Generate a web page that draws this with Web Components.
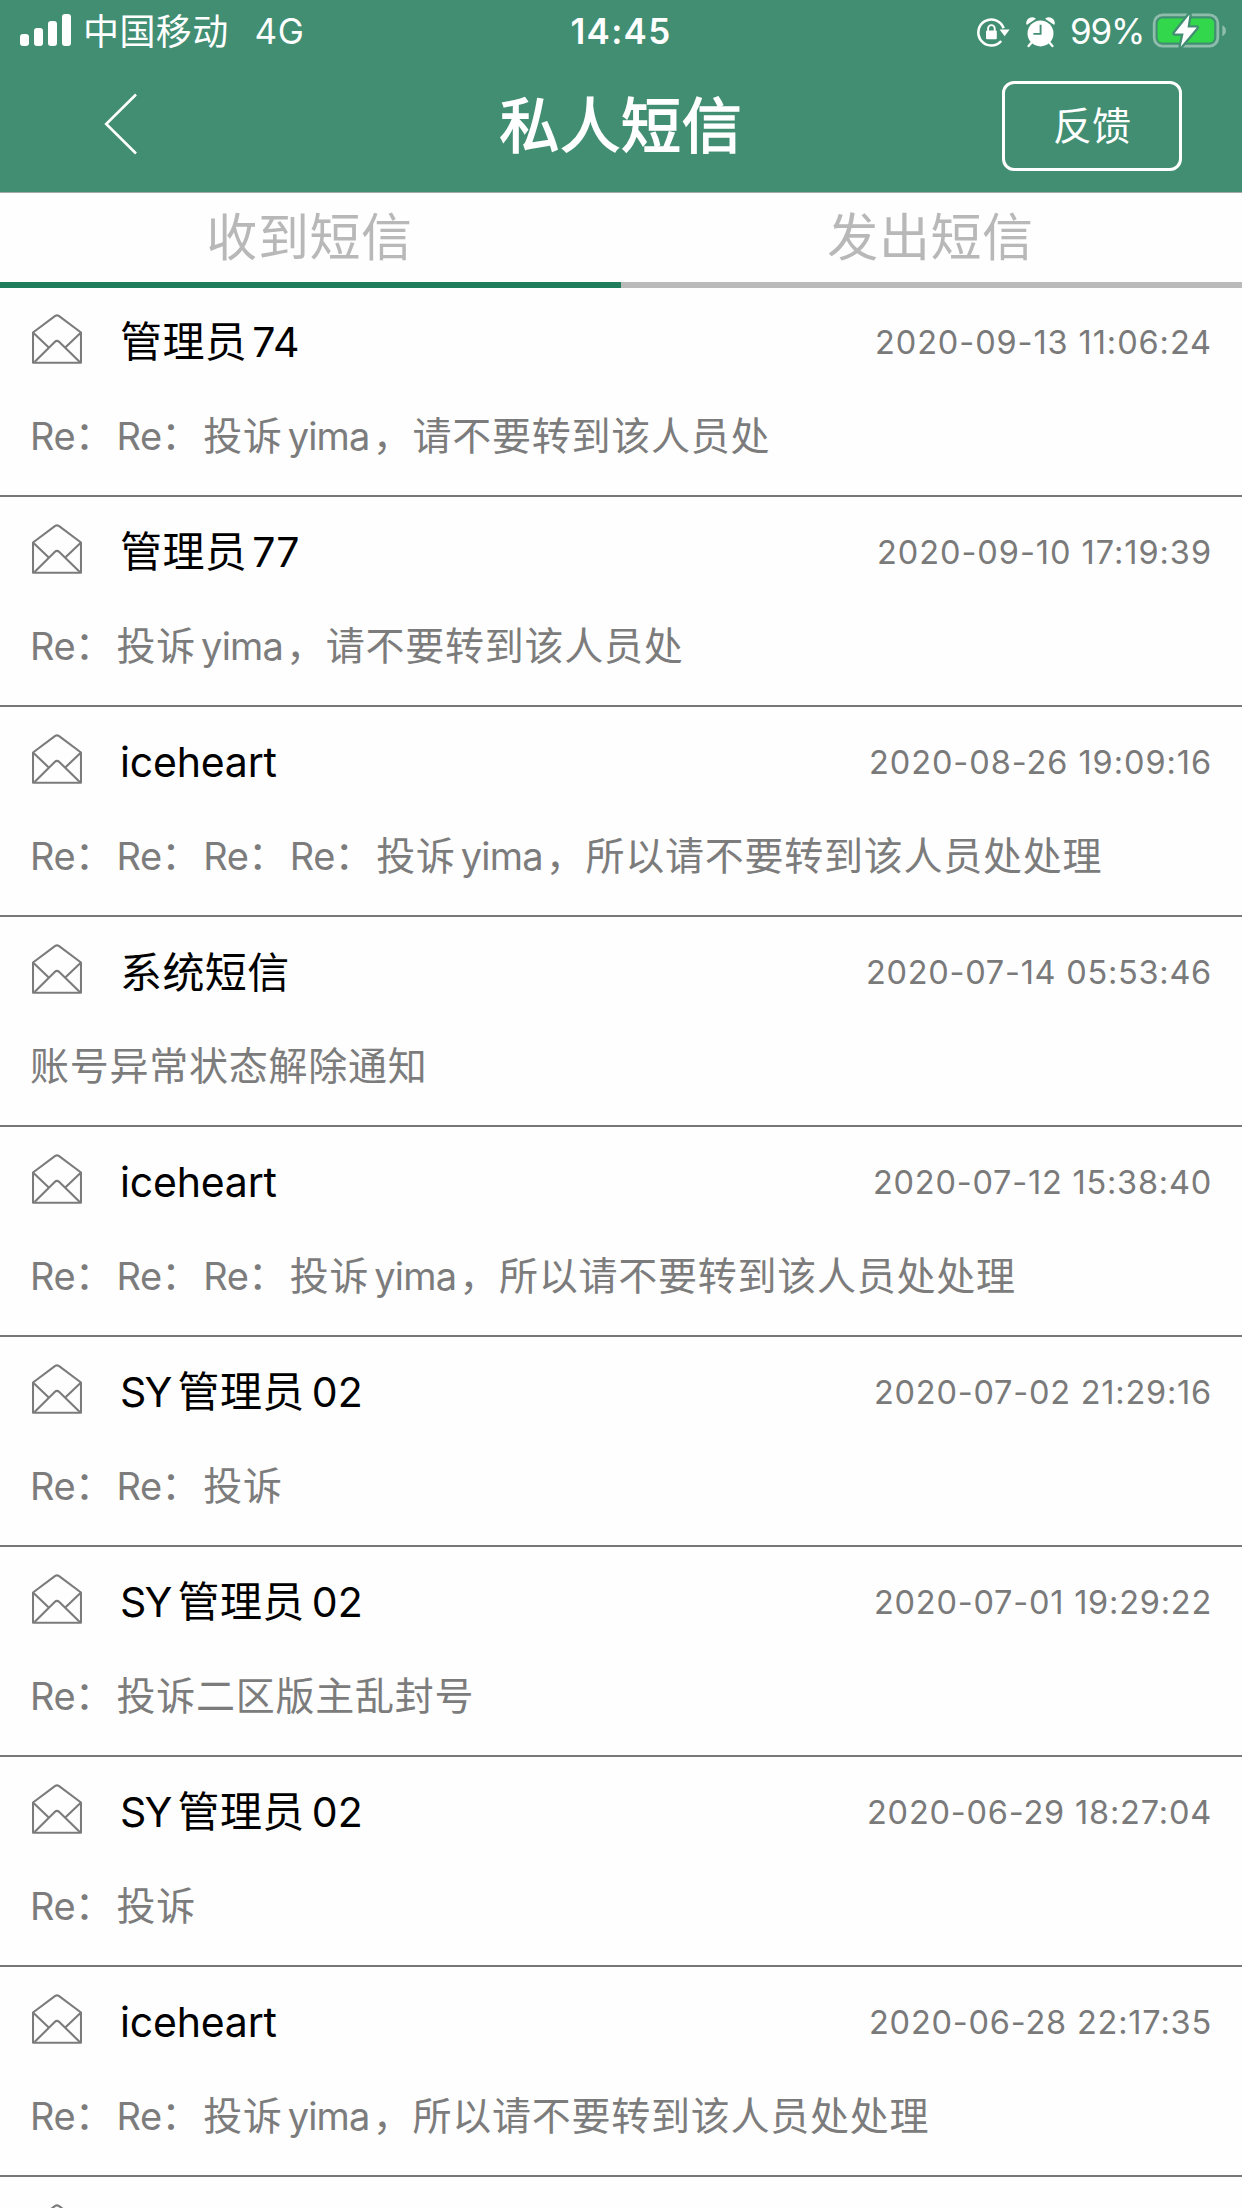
<!DOCTYPE html>
<html lang="zh-CN">
<head>
<meta charset="utf-8">
<title>私人短信</title>
<style>
html,body{margin:0;padding:0;background:#fefefe}
body{width:1242px;height:2208px;overflow:hidden;font-family:Inter,"Noto Sans CJK SC",sans-serif}
</style>
</head>
<body>
<message-app></message-app>
<script>
const define = (name, html, setup) => {
  const template = document.createElement('template');
  template.innerHTML = html;
  customElements.define(name, class extends HTMLElement {
    constructor() {
      super();
      this.attachShadow({mode: 'open'}).append(template.content.cloneNode(true));
    }
    connectedCallback() { if (setup) setup(this, this.shadowRoot); }
  });
};

/* A run of text tracked out (or in) to an exact advance width. */
define('fit-run', `<style>:host{display:inline-block;white-space:pre;text-align:left}span{display:inline-block}</style><span><slot></slot></span>`,
  (host, root) => {
    const w = +host.getAttribute('w');
    const span = root.querySelector('span');
    const natural = span.getBoundingClientRect().width;
    host.style.letterSpacing = (w - natural) / host.textContent.length + 'px';
    host.style.width = w + 'px';
  });

define('signal-bars', `<style>:host{display:flex;align-items:flex-end;gap:5px;height:32px}
i{width:9px;border-radius:3px;background:#fff}</style>
<i style="height:12px"></i><i style="height:18px"></i><i style="height:25px"></i><i style="height:32px"></i>`);

define('lock-icon', `<style>:host{display:block}svg{display:block}</style>
<svg width="34" height="34" viewBox="0 0 34 34" fill="none">
<path d="M27.6 13.2A13 13 0 1 0 25.2 26" stroke="#fff" stroke-width="2.6"/>
<path d="M23.6 14.6h10l-5 6.6z" fill="#fff"/>
<rect x="10" y="15.4" width="10.8" height="8.8" rx="1" fill="#fff"/>
<path d="M12.1 16v-2.6a3.3 3.3 0 0 1 6.6 0V16" stroke="#fff" stroke-width="1.9"/></svg>`);

define('alarm-icon', `<style>:host{display:block}svg{display:block}</style>
<svg width="31" height="32" viewBox="0 0 31 32">
<circle cx="15.5" cy="17.4" r="13" fill="#fff"/>
<path d="M2 7.8A5.4 5.4 0 0 1 9.8 2.6zM29 7.8A5.4 5.4 0 0 0 21.2 2.6z" fill="#fff" stroke="#fff" stroke-width="1.6" stroke-linejoin="round"/>
<path d="M6.2 27l-2.6 3M24.8 27l2.6 3" stroke="#fff" stroke-width="2.4" stroke-linecap="round"/>
<path d="M15.6 8.8v9.1H8.4" fill="none" stroke="#418e73" stroke-width="1.9"/></svg>`);

define('battery-icon', `<style>:host{display:block}svg{display:block}</style>
<svg width="76" height="42" viewBox="0 0 76 42">
<rect x="2.2" y="5.8" width="63.6" height="31.4" rx="8.5" fill="none" stroke="#8fbdab" stroke-width="2.8"/>
<path d="M70.3 16.2c4.8 1.8 4.8 9.2 0 11z" fill="#8fbdab"/>
<rect x="5.6" y="9.6" width="56.6" height="24" rx="4.8" fill="#32d74b"/>
<path d="M37.5 5.5L22.5 24.4H31.6L28.7 37.8L44.8 18.5H35.5Z" fill="#fff" stroke="#418e73" stroke-width="4.6" paint-order="stroke" stroke-linejoin="round"/></svg>`);

define('status-bar', `<style>
:host{display:flex;justify-content:space-between;height:62px;line-height:62px;color:#fff;font-size:35px;padding:0 14px 0 20px;box-sizing:border-box}
.side{display:flex;align-items:center;width:420px}
.right{justify-content:flex-end;width:426px}
.carrier{font-size:36px;letter-spacing:.4px;margin-left:12px;margin-top:2px}
.net{margin-left:26px}
.time{font-weight:600;}
lock-icon{margin-right:15px}alarm-icon{margin-right:14px}battery-icon{margin-left:8px}
signal-bars{margin-top:-2px}
lock-icon,alarm-icon{margin-top:1px}battery-icon{margin-top:-3px}
</style>
<div class="side"><signal-bars></signal-bars><span class="carrier">中国移动</span><fit-run class="net" w="50">4G</fit-run></div>
<fit-run class="time" w="101">14:45</fit-run>
<div class="side right"><lock-icon></lock-icon><alarm-icon></alarm-icon><fit-run w="74">99%</fit-run><battery-icon></battery-icon></div>`);

define('nav-bar', `<style>
:host{display:grid;grid-template-columns:1fr auto 1fr;align-items:center;height:128px;padding:0 60px 2px 0;color:#fff;box-sizing:content-box;width:1182px}
svg{display:block;margin:-4px 0 0 102px}
h1{margin:0;font-size:60px;line-height:80px;font-weight:400;letter-spacing:.8px;-webkit-text-stroke:1.6px #fff;padding-left:60px}
button{all:unset;justify-self:end;box-sizing:border-box;width:180px;height:90px;border:3px solid #fff;border-radius:12px;text-align:center;font-size:39px;line-height:84px}
</style>
<svg width="38" height="66" viewBox="0 0 38 66"><path d="M34 3.5L4.2 33L34 62.5" fill="none" stroke="#fff" stroke-width="2.6"/></svg>
<h1>私人短信</h1><button>反馈</button>`);

define('tab-item', `<style>
:host{flex:1;box-sizing:border-box;height:95px;border-bottom:6px solid #bababa;text-align:center;font-size:51px;line-height:90px;letter-spacing:.6px;padding-right:2px;color:#b8b8b8}
:host([active]){border-color:#1f7d5b}
</style><slot></slot>`);

define('tab-strip', `<style>:host{display:flex;border-top:1px solid #a4aaa7}</style>
<tab-item active>收到短信</tab-item><tab-item>发出短信</tab-item>`);

define('mail-icon', `<style>:host{display:block}svg{display:block}</style>
<svg width="50" height="51" viewBox="0 0 50 51" fill="none" stroke="#7b7b7b" stroke-width="2.1" stroke-linejoin="round">
<path d="M1 18.5V48.7H49V18.5L26.8 1.9Q25 .8 23.2 1.9Z"/><path d="M1 18.5L17 33.7M49 18.5L33 33.7M2.5 48L22.7 28Q25 25.8 27.3 28L47.8 48"/></svg>`);

define('message-row', `<style>
:host{display:block;height:210px;box-sizing:border-box;border-bottom:2px solid #777}
.head{display:flex;align-items:center;height:110px;padding:0 30px 0 32px}
.name{flex:1;margin-left:38px;font-size:42px;line-height:111px;letter-spacing:.4px;color:#000;white-space:pre}
.date{font-size:32.5px;line-height:109px;color:#7a7a7a}
.subject{font-size:39px;line-height:78px;letter-spacing:.75px;color:#7c7c7c;padding-left:30px;white-space:pre}
mail-icon{margin-top:-5px}
</style>
<div class="head"><mail-icon></mail-icon><span class="name"><slot name="name"></slot></span><span class="date"><slot name="date"></slot></span></div>
<div class="subject"><slot></slot></div>`);

const re = n => '<fit-run w="46.8" style="font-size:38px">Re</fit-run><span style="position:relative;left:-2px;top:-1px">：</span>'.repeat(n);
const yima = '<fit-run w="85" style="font-size:38px;margin-left:5px">yima</fit-run>';
const admin = (num) => `管理员<fit-run w="48" style="font-size:41px;margin-left:5px">${num}</fit-run>`;
const sy = `<fit-run w="51.5" style="font-size:41px;margin-right:6px">SY</fit-run>管理员<fit-run w="52" style="font-size:41px;margin-left:7px">02</fit-run>`;
const ice = '<fit-run w="160" style="font-size:41px">iceheart</fit-run>';
const messages = [
  [admin(74), '2020-09-13 11:06:24', 337, `${re(2)}投诉${yima}，请不要转到该人员处`],
  [admin(77), '2020-09-10 17:19:39', 335, `${re(1)}投诉${yima}，请不要转到该人员处`],
  [ice, '2020-08-26 19:09:16', 343, `${re(4)}投诉${yima}，所以请不要转到该人员处处理`],
  ['系统短信', '2020-07-14 05:53:46', 346, '账号异常状态解除通知'],
  [ice, '2020-07-12 15:38:40', 339, `${re(3)}投诉${yima}，所以请不要转到该人员处处理`],
  [sy, '2020-07-02 21:29:16', 338, `${re(2)}投诉`],
  [sy, '2020-07-01 19:29:22', 338, `${re(1)}投诉二区版主乱封号`],
  [sy, '2020-06-29 18:27:04', 345, `${re(1)}投诉`],
  [ice, '2020-06-28 22:17:35', 343, `${re(2)}投诉${yima}，所以请不要转到该人员处处理`],
];

define('message-list', `<style>:host{display:block;margin-top:-1px}</style>` +
  messages.map(([name, date, w, subject]) => `<message-row><span slot="name">${name}</span><fit-run slot="date" w="${w}">${date}</fit-run>${subject}</message-row>`).join('') +
  `<message-row></message-row>`);

define('message-app', `<style>
:host{display:block;width:1242px;height:2208px;overflow:hidden;background:#fefefe}
header{background:#418e73;height:192px}
</style>
<header><status-bar></status-bar><nav-bar></nav-bar></header>
<tab-strip></tab-strip>
<message-list></message-list>`);
</script>
</body>
</html>
